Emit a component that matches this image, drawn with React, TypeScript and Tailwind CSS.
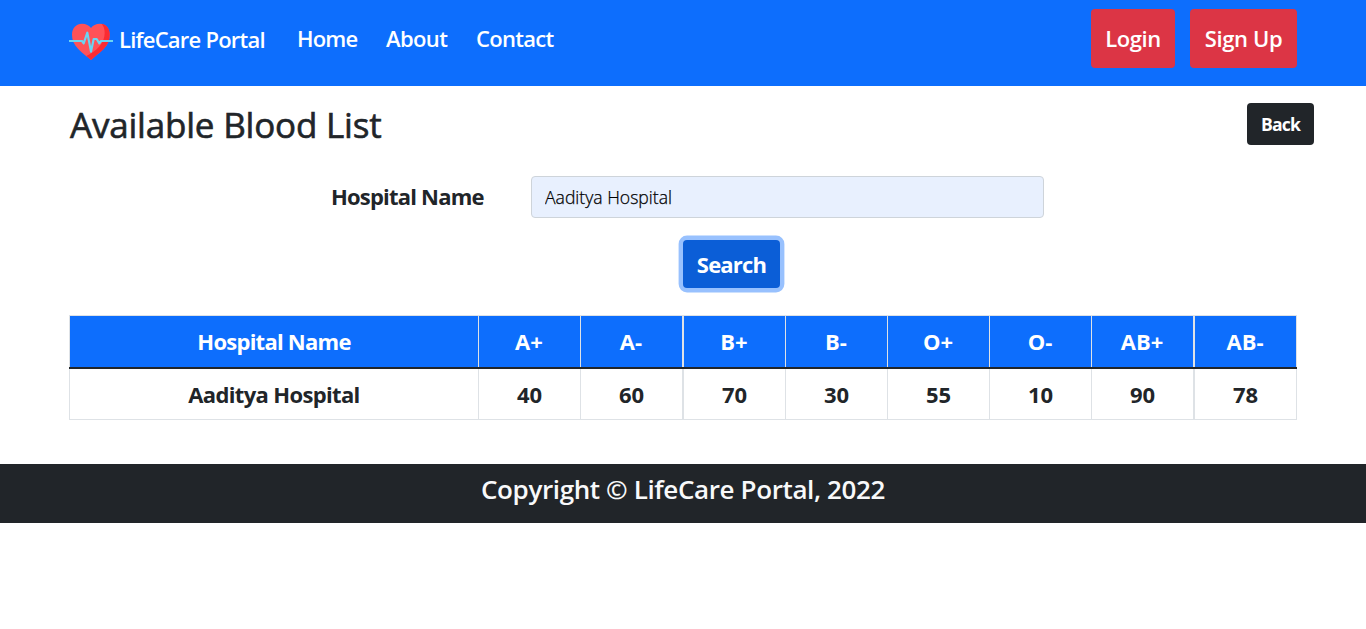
import React from 'react';

const groups = [
  { name: 'A+', units: 40 },
  { name: 'A-', units: 60 },
  { name: 'B+', units: 70 },
  { name: 'B-', units: 30 },
  { name: 'O+', units: 55 },
  { name: 'O-', units: 10 },
  { name: 'AB+', units: 90 },
  { name: 'AB-', units: 78 },
];

// The lines before B+ and AB- are two pixels wide.
const columnLine = (i: number) =>
  i === 2 || i === 7 ? 'border-l-2 border-[#dee2e6]' : 'border-l border-[#dee2e6]';

function HeartLogo() {
  return (
    <svg className="h-[40px] w-[44px] shrink-0" viewBox="27 36 132 120">
      <path
        d="M93 150C84 141 68 131 54 116C42 103 36 91 36 74C36 54 49 41 66 41C78 41 88 46 93 54C98 46 108 41 120 41C137 41 149 54 149 74C149 91 143 104 131 117C117 131 102 141 93 150Z"
        fill="#ff5258"
      />
      <path
        d="M125 41C140 43 149 56 149 74C149 91 143 104 131 117C117 131 102 141 93 150C89 146 84 142 79 138C110 122 134 101 134 69C134 57 131 48 125 41Z"
        fill="#fb2b32"
      />
      <path
        d="M27 93H66L71 100L82 68L93 125L101 87H110L118 100L123 93H159"
        fill="none"
        stroke="#6bd5f2"
        strokeWidth="6.5"
        strokeLinejoin="round"
      />
    </svg>
  );
}

export default function App() {
  return (
    <div className="min-h-[629px] bg-white font-['Open_Sans','Noto_Sans',sans-serif] text-[#212529] whitespace-nowrap">
      <nav className="flex h-[86px] items-start bg-[#0d6efd] pl-[69px] pr-[69px] text-[22px] leading-[33px] font-semibold text-white">
        <a className="flex items-start pt-[22px]">
          <HeartLogo />
          <span className="ml-[6px] mt-px w-[178px] tracking-[-0.77px]">LifeCare Portal</span>
        </a>
        <a className="w-[89px] pt-[22px] tracking-[-0.8px]">Home</a>
        <a className="w-[90px] pt-[22px] tracking-[-0.6px]">About</a>
        <a className="pt-[22px] tracking-[-0.7px]">Contact</a>
        <div className="ml-auto flex gap-[15px] pt-[9px]">
          <button className="flex h-[59px] w-[84px] items-center justify-center rounded-[4px] bg-[#dc3545] pb-px tracking-[-0.45px]">
            Login
          </button>
          <button className="flex h-[59px] w-[107px] items-center justify-center rounded-[4px] bg-[#dc3545] pb-px tracking-[-0.35px]">
            Sign Up
          </button>
        </div>
      </nav>

      <main>
        <div className="flex h-[90px] items-start justify-between pl-[70px] pr-[52px] pt-[17px]">
          <h1 className="text-[35px] leading-[44px] font-normal tracking-[-0.2px] [-webkit-text-stroke:0.6px_#212529]">
            Available Blood List
          </h1>
          <button className="flex h-[42px] w-[67px] items-center justify-center rounded-[4px] bg-[#212529] text-[17.6px] font-bold tracking-[-0.8px] text-white">
            Back
          </button>
        </div>

        <div className="flex items-center pl-[331px]">
          <label className="w-[200px] pb-[2px] text-[22px] leading-[33px] font-bold tracking-[-0.8px]">Hospital Name</label>
          <input
            className="h-[42px] w-[513px] rounded-[4px] border border-[#ced4da] bg-[#e8f0fe] px-[13px] text-[17.6px] font-light tracking-[0px] text-black outline-none [-webkit-text-stroke:0.25px_#000]"
            defaultValue="Aaditya Hospital"
          />
        </div>

        <div className="pl-[683px] pt-[22px]">
          <button className="flex h-[48px] w-[97px] items-center justify-center rounded-[4px] bg-[#0b5ed7] text-[22px] font-bold tracking-[-0.8px] text-white shadow-[0_0_0_4.4px_#98c1fe]">
            Search
          </button>
        </div>

        <div className="ml-[69px] mt-[27px] w-[1228px] border-y border-[#dee2e6] text-center text-[22px] leading-[33px] font-bold">
          <div className="border-b-2 border-[#212529]">
            <div className="grid h-[51px] grid-cols-[409px_102px_102px_103px_102px_102px_102px_102px_103px] border-r border-[#dee2e6] bg-[#0d6efd] text-white">
              <div className="border-l border-[#dee2e6] pt-[9px] tracking-[-0.75px]">Hospital Name</div>
              {groups.map((g, i) => (
                <div key={g.name} className={`pt-[9px] pr-px ${columnLine(i)}`}>
                  {g.name}
                </div>
              ))}
            </div>
          </div>
          <div className="grid h-[50px] grid-cols-[409px_102px_102px_103px_102px_102px_102px_102px_103px] border-r border-[#dee2e6]">
            <div className="border-l border-[#dee2e6] pt-[9px] tracking-[-0.65px]">Aaditya Hospital</div>
            {groups.map((g, i) => (
              <div key={g.name} className={`pt-[9px] ${columnLine(i)}`}>
                {g.units}
              </div>
            ))}
          </div>
        </div>
      </main>

      <footer className="mt-[44px] h-[59px] bg-[#212529] pt-[8px] text-center text-[26px] leading-[35px] font-semibold tracking-[-0.38px] text-[#f8f9fa]">
        Copyright © LifeCare Portal, 2022
      </footer>
    </div>
  );
}
